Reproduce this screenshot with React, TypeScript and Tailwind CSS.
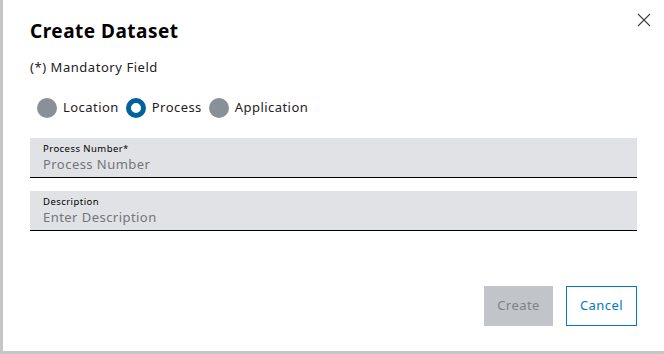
import React from "react";

function Radio({ checked, label }: { checked?: boolean; label: string }) {
  return (
    <label className="flex items-center gap-[6px]">
      {checked ? (
        <span className="w-5 h-5 rounded-full border-[5px] border-[#00629a] bg-white box-border" />
      ) : (
        <span className="w-5 h-5 rounded-full bg-[#8a9097]" />
      )}
      <span className="text-[13px] tracking-[0.45px] text-[#1f2124]">{label}</span>
    </label>
  );
}

function Field({ label, placeholder }: { label: string; placeholder: string }) {
  return (
    <div className="h-[40px] bg-[#e0e2e5] border-b border-[#000] px-[13px] pt-[4px] flex flex-col">
      <span className="text-[9.5px] leading-[13px] tracking-[0.45px] text-[#000]">{label}</span>
      <span className="text-[13px] leading-[18px] tracking-[0.45px] text-[#71767c]">{placeholder}</span>
    </div>
  );
}

export default function App() {
  return (
    <div
      className="w-[664px] h-[354px] bg-white border-l-[3px] border-b-[3px] border-[#c4c6c8] relative flex flex-col px-[27px] box-border"
      style={{ fontFamily: "'Noto Sans', 'Open Sans', sans-serif" }}
    >
      <button className="absolute right-[13px] top-[12px] w-[15px] h-[15px] flex items-center justify-center">
        <svg width="14" height="14" viewBox="0 0 14 14" fill="none" stroke="#3b3e42" strokeWidth="1.1">
          <path d="M1 1L13 13M13 1L1 13" />
        </svg>
      </button>
      <h1 className="mt-[18px] text-[19px] leading-[26px] font-bold tracking-[0.5px] text-[#000]">Create Dataset</h1>
      <p className="mt-[15px] text-[13px] leading-[16px] tracking-[0.55px] text-[#1f2124]">(*) Mandatory Field</p>
      <div className="mt-[23px] flex items-center gap-[7px] pl-[7px]">
        <Radio label="Location" />
        <Radio checked label="Process" />
        <Radio label="Application" />
      </div>
      <div className="mt-[20px] flex flex-col gap-[13px]">
        <Field label="Process Number*" placeholder="Process Number" />
        <Field label="Description" placeholder="Enter Description" />
      </div>
      <div className="mt-auto mb-[25px] flex justify-end gap-[13px]">
        <button className="w-[69px] h-[40px] bg-[#c1c4c9] text-[#7d8389] text-[13px] tracking-[0.45px]">Create</button>
        <button className="w-[71px] h-[40px] border border-[#007bc0] text-[#007bc0] text-[13px] tracking-[0.45px]">Cancel</button>
      </div>
    </div>
  );
}
